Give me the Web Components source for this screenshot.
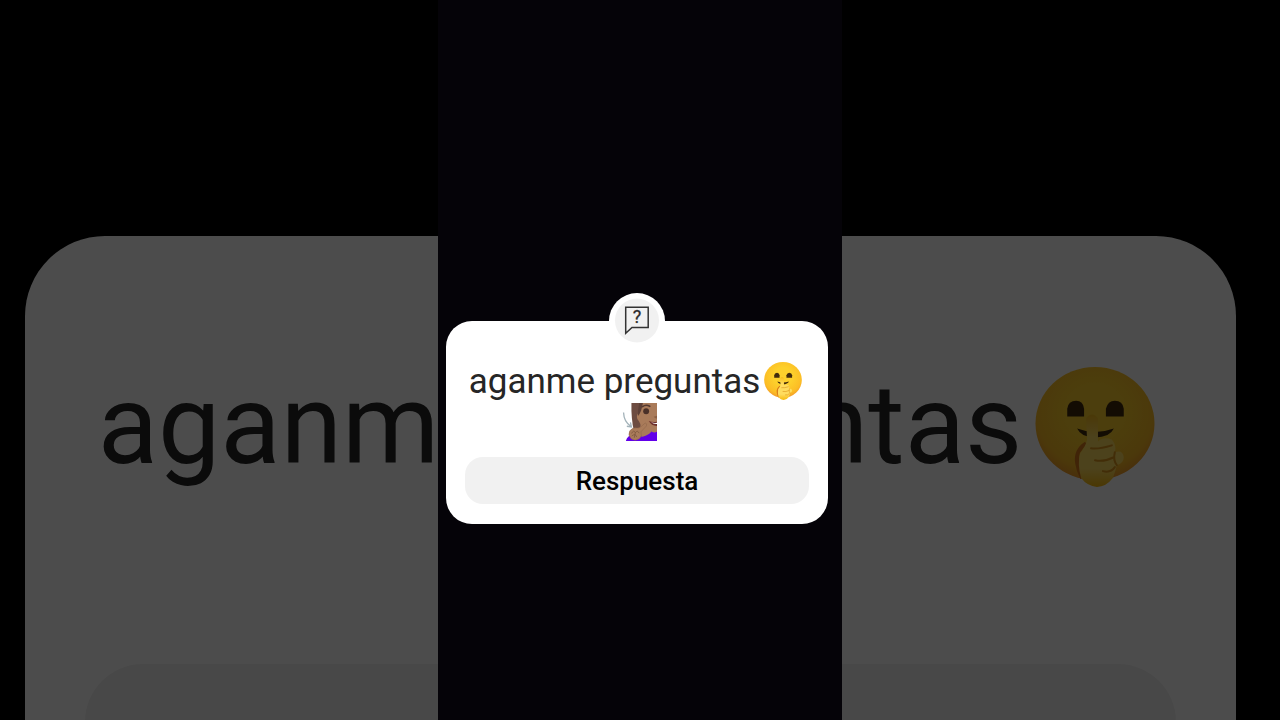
<!DOCTYPE html>
<html lang="es">
<head>
<meta charset="utf-8">
<meta name="viewport" content="width=device-width, initial-scale=1">
<title>aganme preguntas</title>
<style>
  body {
    margin: 0;
    background: #000;
    font-family: Roboto, "Liberation Sans", sans-serif;
  }
</style>
</head>
<body>

<story-stage>
  <question-card slot="backdrop" size="large" inert aria-hidden="true">
    aganme preguntas<shush-emoji></shush-emoji><deaf-emoji></deaf-emoji>
  </question-card>
  <question-card>
    aganme preguntas<shush-emoji></shush-emoji><deaf-emoji></deaf-emoji>
    <span slot="answer">Respuesta</span>
  </question-card>
</story-stage>

<script>
class StoryStage extends HTMLElement {
  connectedCallback() {
    const shadow = this.attachShadow({ mode: 'open' })
    shadow.innerHTML = `
      <style>
        :host {
          display: grid;
          height: 100vh;
          overflow: hidden;
        }
        .backdrop, .story {
          grid-area: 1 / 1;
          min-height: 0;
          box-sizing: border-box;
        }
        .backdrop {
          padding: 236px 44px 0 25px;
          opacity: 0.3;
        }
        .story {
          display: flex;
          flex-direction: column;
          justify-content: center;
          justify-self: center;
          height: 100vh;
          aspect-ratio: 101 / 180;
          padding: 125px 14px 0 8px;
          background: #050308;
          z-index: 1;
        }
      </style>
      <div class="backdrop"><slot name="backdrop"></slot></div>
      <main class="story"><slot></slot></main>
    `
  }
}
window.customElements.define('story-stage', StoryStage)

class QuestionBadge extends HTMLElement {
  connectedCallback() {
    const shadow = this.attachShadow({ mode: 'open' })
    shadow.innerHTML = `
      <style>
        :host {
          display: block;
        }
        svg {
          display: block;
          width: 100%;
          height: 100%;
        }
        text {
          font-family: Roboto, sans-serif;
          font-size: 18px;
          font-weight: 400;
          text-anchor: middle;
          fill: #2b2b2b;
          stroke: #2b2b2b;
          stroke-width: 0.3;
        }
      </style>
      <svg viewBox="0 0 56 56" aria-hidden="true">
        <circle cx="28" cy="28" r="28" fill="#fff"/>
        <circle cx="28" cy="27.5" r="22" fill="#f1f1f1"/>
        <path d="M16.7 14.3H39.2V34.5H23L16.7 40.3Z" fill="none" stroke="#333" stroke-width="1.5"/>
        <text x="28" y="30">?</text>
      </svg>
    `
  }
}
window.customElements.define('question-badge', QuestionBadge)

class QuestionCard extends HTMLElement {
  connectedCallback() {
    const shadow = this.attachShadow({ mode: 'open' })
    shadow.innerHTML = `
      <style>
        :host {
          --text: 35px;
          --line: 41px;
          --emoji: 38px;
          --emoji-margin: 0 3px 0 4px;
          --emoji-top: 1px;
          --badge: 56px;
          --answer-text: 26px;
          --answer-height: 47px;
          --answer-radius: 18px;
          display: flex;
          flex-direction: column;
          gap: 14px;
          position: relative;
          padding: 40px 19px 20px;
          border-radius: 26px;
          background: #fff;
        }
        :host([size="large"]) {
          --text: 111px;
          --line: 130px;
          --emoji: 120px;
          --emoji-margin: 0 8px 0 13px;
          --emoji-top: 7px;
          --badge: 177px;
          --answer-text: 82px;
          --answer-height: 149px;
          --answer-radius: 58px;
          gap: 44px;
          padding: 124px 60px 63px;
          border-radius: 80px;
        }
        question-badge {
          position: absolute;
          top: 0;
          left: 50%;
          width: var(--badge);
          height: var(--badge);
          transform: translate(-50%, -50%);
        }
        h1 {
          margin: 0;
          font-size: var(--text);
          line-height: var(--line);
          font-weight: 400;
          text-align: center;
          color: #262626;
        }
        button {
          height: var(--answer-height);
          padding: 0;
          border: 0;
          border-radius: var(--answer-radius);
          background: #f1f1f1;
          color: #000;
          font-family: inherit;
          font-size: var(--answer-text);
          font-weight: 500;
        }
      </style>
      <question-badge></question-badge>
      <h1><slot></slot></h1>
      <button type="button"><slot name="answer"></slot></button>
    `
  }
}
window.customElements.define('question-card', QuestionCard)

class ShushEmoji extends HTMLElement {
  connectedCallback() {
    const shadow = this.attachShadow({ mode: 'open' })
    shadow.innerHTML = `
      <style>
        :host {
          display: inline-block;
          height: var(--emoji);
          margin: var(--emoji-margin);
          vertical-align: top;
        }
        svg {
          display: block;
          width: var(--emoji);
          height: 100%;
          margin-top: var(--emoji-top);
        }
      </style>
      <svg viewBox="0 0 120 121" role="img" aria-label="cara pidiendo silencio">
        <defs>
          <radialGradient id="face" cx="0.5" cy="0.4" r="0.62">
            <stop offset="0.4" stop-color="#fdd02c"/>
            <stop offset="0.8" stop-color="#fcbd25"/>
            <stop offset="1" stop-color="#f0962a"/>
          </radialGradient>
          <linearGradient id="hand" x1="0" y1="0" x2="0" y2="1">
            <stop offset="0" stop-color="#f9bd1a"/>
            <stop offset="0.3" stop-color="#ffdc5e"/>
            <stop offset="0.75" stop-color="#ffdc5e"/>
            <stop offset="1" stop-color="#f7b90c"/>
          </linearGradient>
        </defs>
        <ellipse cx="60" cy="57" rx="60" ry="57" fill="url(#face)"/>
        <path d="M32 50V42Q33 34 41 34Q48 34 49 42V50Z" fill="#422b0d"/>
        <path d="M71 50V42Q73 34 80 34Q88 34 89 42V50Z" fill="#422b0d"/>
        <path d="M42 62Q60 69 79 62Q75 71 60 71Q46 71 42 62Z" fill="#422b0d"/>
        <path d="M51 77Q40 84 42 97Q43 104 47 112" fill="none" stroke="#d87a1b" stroke-width="4"/>
        <path d="M51 52Q57 44 63 52L63 75Q68 70 77 73Q82 79 80 86Q88 83 89 91Q89 97 82 99Q80 107 78 112Q71 121 62 121Q52 120 46 112Q42 98 45 87Q51 79 52 73Z" fill="url(#hand)"/>
        <path d="M56 82Q64 83 77 79M60 94Q69 96 79 91M68 105Q76 107 80 101M80 86Q78 94 82 99" fill="none" stroke="#dd971d" stroke-width="2" stroke-linecap="round"/>
      </svg>
    `
  }
}
window.customElements.define('shush-emoji', ShushEmoji)

class DeafEmoji extends HTMLElement {
  connectedCallback() {
    const shadow = this.attachShadow({ mode: 'open' })
    shadow.innerHTML = `
      <style>
        :host {
          display: inline-block;
          height: var(--emoji);
          vertical-align: top;
        }
        svg {
          display: block;
          height: 100%;
          margin-top: var(--emoji-top);
        }
      </style>
      <svg viewBox="-18 0 123 116" role="img" aria-label="mujer sorda">
        <path d="M26 0H62L60 80L34 88Q25 50 26 0Z" fill="#6d4c41"/>
        <path d="M56 0H105V116H40L50 78Q58 70 49 56Q40 48 44 36Q54 22 56 0Z" fill="#a97b5a"/>
        <path d="M50 0H61Q57 28 46 40Q45 22 50 0Z" fill="#5d4037"/>
        <path d="M60 11Q70 3 82 10" fill="none" stroke="#543930" stroke-width="5" stroke-linecap="round"/>
        <circle cx="71" cy="25" r="9" fill="#4a3028"/>
        <path d="M94 42Q99 49 105 47V39Z" fill="#8b5f43"/>
        <path d="M79 55Q92 60 105 57V70Q88 71 79 55Z" fill="#6d2f2b"/>
        <path d="M86 59Q95 62 105 60V64Q93 65 86 59Z" fill="#fff"/>
        <path d="M9 116Q14 100 28 98L60 103Q80 98 87 87Q97 93 105 87V116Z" fill="#6200ea"/>
        <path d="M56 72L68 61Q75 62 72 70L55 88Q60 100 50 109Q37 118 25 109Q14 98 21 85Q29 74 42 76Q49 78 56 72Z" fill="#a97b5a" stroke="#8b6247" stroke-width="1.5"/>
        <path d="M27 92Q33 80 38 91Q44 81 49 91M28 100Q39 91 42 103M38 91L35 105" fill="none" stroke="#80583f" stroke-width="2.5" stroke-linecap="round"/>
        <path d="M2 29Q3 57 24 71M12 71L26 73L23 59" fill="none" stroke="#a3b2b9" stroke-width="4"/>
      </svg>
    `
  }
}
window.customElements.define('deaf-emoji', DeafEmoji)
</script>
</body>
</html>
